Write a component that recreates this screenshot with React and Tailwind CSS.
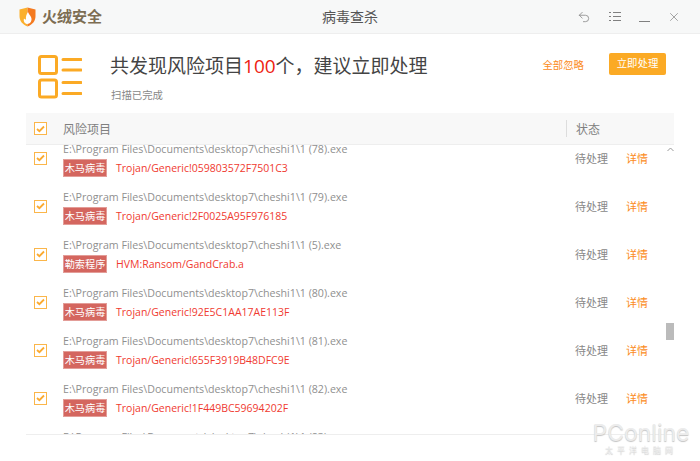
import React from "react"
import { Undo2, X } from "lucide-react"

const rows = [
  { path: "(78)", tag: "木马病毒", name: "Trojan/Generic!059803572F7501C3" },
  { path: "(79)", tag: "木马病毒", name: "Trojan/Generic!2F0025A95F976185" },
  { path: "(5)", tag: "勒索程序", name: "HVM:Ransom/GandCrab.a" },
  { path: "(80)", tag: "木马病毒", name: "Trojan/Generic!92E5C1AA17AE113F" },
  { path: "(81)", tag: "木马病毒", name: "Trojan/Generic!655F3919B48DFC9E" },
  { path: "(82)", tag: "木马病毒", name: "Trojan/Generic!1F449BC59694202F" },
  { path: "(83)", tag: "木马病毒", name: "Trojan/Generic!3A17C0D2E58B6F41" },
]

const Checkbox = () => (
  <div className="w-[13px] h-[13px] border border-[#fbb64a] bg-white flex items-center justify-center shrink-0">
    <svg width="9" height="8" viewBox="0 0 9 8" fill="none">
      <path d="M1 4l2.4 2.2L8 1.5" stroke="#fbaa30" strokeWidth="1.8" />
    </svg>
  </div>
)

const Logo = () => (
  <svg width="17" height="20" viewBox="0 0 17 20">
    <path d="M0.5 2.5L8.5 0.5V19.5C3.5 17.5 0.5 14 0.5 9Z" fill="#fbb02d" />
    <path d="M8.5 0.5L16.5 2.5V9C16.5 14 13.5 17.5 8.5 19.5Z" fill="#f47a20" />
    <path d="M9 5C10 8 13 9.5 12.5 13C12 16 9.5 17 8 17C5.5 16.5 4.2 14 5 11.5C5.8 12.5 6.5 12.8 7 12.5C6.5 10 7.5 7 9 5Z" fill="#fff" />
  </svg>
)

const ListIcon = () => (
  <svg width="44" height="44" viewBox="0 0 44 44" fill="none" stroke="#fbaa25" strokeWidth="3">
    <rect x="1.5" y="1.5" width="17" height="17" rx="2" />
    <rect x="1.5" y="25" width="17" height="17" rx="2" />
    <path d="M25 4.5H43M25 15H43M25 27.5H43M25 38.5H43" strokeLinecap="round" />
  </svg>
)

const MenuIcon = () => (
  <svg width="12" height="11" viewBox="0 0 12 11" fill="none" stroke="#808080">
    <path d="M0 1.5H2M4 1.5H12M0 5.5H2M4 5.5H12M0 9.5H2M4 9.5H12" />
  </svg>
)

const Row = ({ row }) => (
  <div className="h-12 flex items-center shrink-0">
    <div className="w-[37px] pl-[8px] shrink-0">
      <Checkbox />
    </div>
    <div className="flex-1 min-w-0 pt-[3px]">
      <p className="text-[10.65px] leading-[14px] text-[#8f8f8f] whitespace-nowrap">
        E:\Program Files\Documents\desktop7\cheshi1\1 {row.path}.exe
      </p>
      <div className="flex items-center mt-[3px]">
        <span className="w-[44px] h-[18px] bg-[#d4665f] border border-[#e39d98] text-white text-[10.2px] leading-[16px] text-center whitespace-nowrap shrink-0">
          {row.tag}
        </span>
        <span className="ml-[9px] pt-[2px] text-[10.5px] text-[#f03a30] whitespace-nowrap">{row.name}</span>
      </div>
    </div>
    <span className="w-[51px] pt-[2px] text-[11px] text-[#888888] shrink-0">待处理</span>
    <span className="w-[48px] pt-[2px] text-[11px] text-[#fb8c1c] shrink-0">详情</span>
  </div>
)

export default function App() {
  return (
    <div className="relative w-[700px] h-[461px] overflow-hidden bg-white font-['Open_Sans','Noto_Sans_CJK_SC',sans-serif]">
      <header className="h-[34px] bg-[#f7f8f8] border-b border-[#eeeeee] flex items-center">
        <div className="w-[226px] pl-[19px] flex items-center gap-[6px]">
          <Logo />
          <span className="text-[15px] font-bold text-[#7d6d52]">火绒安全</span>
        </div>
        <h1 className="w-[248px] text-center text-[14px] text-[#555555]">病毒查杀</h1>
        <div className="flex items-center pl-[103px] text-[#808080]">
          <Undo2 size={14} strokeWidth={1.3} />
          <div className="ml-[18px]"><MenuIcon /></div>
          <div className="ml-[18px] w-[11px] h-[1px] bg-[#808080] mt-[9px]" />
          <X size={14} strokeWidth={1.2} className="ml-[17px]" />
        </div>
      </header>

      <section className="h-[79px] flex">
        <div className="pl-[38px] pt-[21px] w-[110px] shrink-0">
          <ListIcon />
        </div>
        <div className="flex-1 pt-[17px]">
          <h2 className="text-[19px] leading-[30px] text-[#444444]">
            共发现风险项目<span className="text-[#ee2211]">100</span>个，建议立即处理
          </h2>
          <p className="mt-[7px] ml-[1px] text-[10.4px] leading-[14px] text-[#888888]">扫描已完成</p>
        </div>
        <div className="flex items-start pt-[19px] pr-[34px]">
          <span className="mt-[1px] text-[10.4px] leading-[22px] text-[#fb8c1c]">全部忽略</span>
          <button className="ml-[25px] w-[57px] h-[22px] rounded-[2px] bg-[#fbaa25] text-white text-[10.4px]">立即处理</button>
        </div>
      </section>

      <div className="mx-[26px] h-[32px] bg-[#f8f8f8] border-b border-[#eeeeee] flex items-center">
        <div className="w-[37px] pl-[8px]"><Checkbox /></div>
        <span className="flex-1 pt-[2px] text-[12px] text-[#808080]">风险项目</span>
        <div className="w-[1px] h-[17px] bg-[#dddddd]" />
        <span className="w-[107px] pl-[9px] pt-[2px] text-[12px] text-[#808080]">状态</span>
      </div>

      <div className="mx-[26px] h-[290px] overflow-hidden border-b border-[#eeeeee]">
        <div className="-mt-[11px] flex flex-col">
          {rows.map((row) => (
            <Row key={row.path} row={row} />
          ))}
        </div>
      </div>

      <svg className="absolute left-[667px] top-[147px]" width="7" height="5" viewBox="0 0 7 5" fill="none">
        <path d="M0.5 4L3.5 1L6.5 4" stroke="#999999" />
      </svg>
      <div className="absolute left-[666px] top-[323px] w-[8px] h-[17px] bg-[#bbbbbb]" />

      <div className="absolute left-[590px] top-[423px] w-[102px] text-center text-[#ececec] [text-shadow:0_1px_1px_#c4c4c4]">
        <div className="text-[23px] leading-[21px] font-['Inter',sans-serif]">PConline</div>
        <div className="text-[8px] leading-[10px] tracking-[4px] mt-[1px]">太平洋电脑网</div>
      </div>
    </div>
  )
}
